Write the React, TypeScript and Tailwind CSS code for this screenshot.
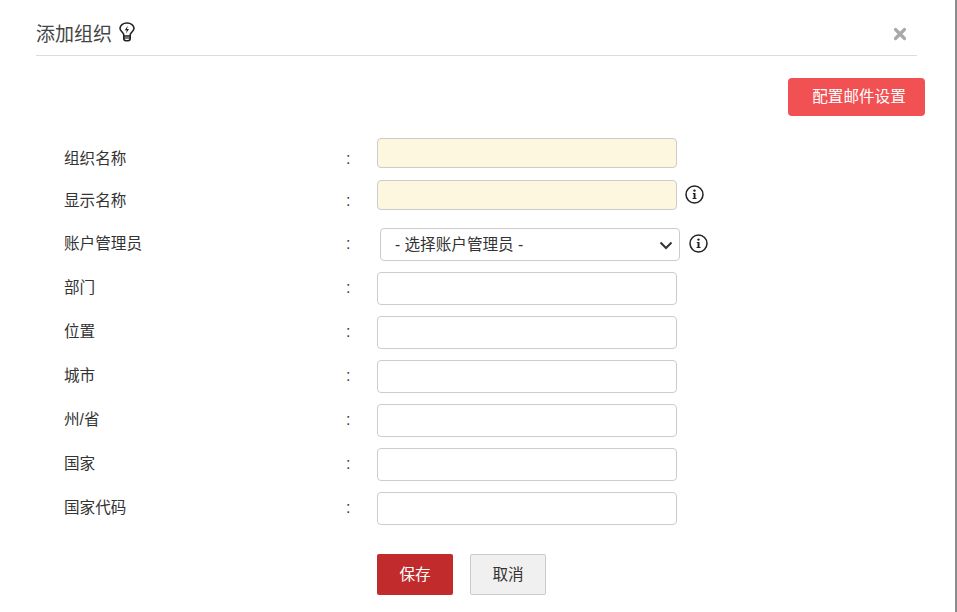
import React from "react";

const font = { fontFamily: '"Liberation Sans", "Noto Sans CJK SC", sans-serif' };

// info icon next to the inputs
function InfoIcon() {
  return (
    <svg width="19" height="19" viewBox="0 0 19 19" className="shrink-0">
      <circle cx="9.5" cy="9.5" r="8.5" fill="none" stroke="#222" strokeWidth="1.5" />
      <circle cx="9.5" cy="5.6" r="1.2" fill="#222" />
      <path d="M7.8 8h2.7v5h1v1H7.600v-1h1V9h-.8z" fill="#222" />
    </svg>
  );
}

function Bulb() {
  return (
    <svg width="16" height="20" viewBox="0 0 16 20">
      <path
        d="M4.8 14V13c0-1-.6-1.800-1.500-2.800C2.200 9 1 7.800 1 6.500 1 3.300 4 1 8 1s7 2.300 7 5.500c0 1.300-1.200 2.500-2.300 3.700-.9 1-1.500 1.800-1.500 2.800v1z"
        fill="none"
        stroke="#222"
        strokeWidth="1.600"
      />
      <path d="M8.800 3.800 5.800 8.300h2l-.8 3.200 3-4.500H8z" fill="#222" />
      <path d="M4.800 14v2.500c0 1.300 1 2.200 2.200 2.200h2c1.200 0 2.200-.9 2.200-2.200V14" fill="none" stroke="#222" strokeWidth="1.600" />
      <path d="M5 16h6" stroke="#222" strokeWidth="1.200" />
    </svg>
  );
}

const rows = [
  { label: "部门" },
  { label: "位置" },
  { label: "城市" },
  { label: "州/省" },
  { label: "国家" },
  { label: "国家代码" },
];

function Label({ text }: { text: string }) {
  return (
    <>
      <div className="w-[282px] text-[15.6px] leading-5 text-[#333]">{text}</div>
      <div className="w-[31px] text-[16px] leading-5 text-[#4a3a30]">:</div>
    </>
  );
}

export default function App() {
  return (
    <div className="w-[957px] h-[612px] bg-white overflow-hidden border-r-2 border-[#8c8c8c]" style={font}>
      {/* Header */}
      <div className="ml-9 mr-[38px] h-[56px] border-b border-[#dcdcdc] flex items-start justify-between">
        <div className="flex items-start mt-[23px]">
          <span className="text-[19px] leading-6 text-[#444]">添加组织</span>
          <span className="ml-[7px] -mt-[1px]">
            <Bulb />
          </span>
        </div>
        <svg width="14" height="14" viewBox="0 0 14 14" className="mt-[27px] mr-[10px]">
          <path d="M2.500 2.500l9 9M11.500 2.500l-9 9" stroke="#a9a9a9" strokeWidth="3.200" strokeLinecap="round" />
        </svg>
      </div>

      <div className="flex justify-end mr-[30px] mt-[22px]">
        <button className="w-[137px] h-[38px] rounded bg-[#f25153] text-white text-[15.6px] pl-[5px]">
          配置邮件设置
        </button>
      </div>

      <div className="mt-[22px] pl-16">
        <div className="flex items-start h-[30px]">
          <div className="pt-[11px] flex">
            <Label text="组织名称" />
          </div>
          <input className="w-[300px] h-[30px] rounded border border-[#cccccc] bg-[#fdf7e0]" />
        </div>

        <div className="flex items-start h-[30px] mt-3">
          <div className="pt-[11px] flex">
            <Label text="显示名称" />
          </div>
          <input className="w-[300px] h-[30px] rounded border border-[#cccccc] bg-[#fdf7e0]" />
          <span className="ml-2 mt-[5px]">
            <InfoIcon />
          </span>
        </div>

        <div className="flex items-start h-[33px] mt-[18px]">
          <div className="pt-[6px] flex">
            <Label text="账户管理员" />
          </div>
          <div className="ml-[3px] w-[300px] h-[33px] rounded border border-[#cccccc] bg-white flex items-center justify-between pl-[14px] pr-[6px] text-[15.6px] text-[#333]">
            <span>- 选择账户管理员 -</span>
            <svg width="14" height="14" viewBox="0 0 14 14">
              <path d="M1.500 4.500 7 10l5.500-5.500" fill="none" stroke="#333" strokeWidth="2" />
            </svg>
          </div>
          <span className="ml-[9px] mt-[6px]">
            <InfoIcon />
          </span>
        </div>

        {rows.map((r) => (
          <div key={r.label} className="flex items-start h-[33px] mt-[11px]">
            <div className="pt-[6px] flex">
              <Label text={r.label} />
            </div>
            <input className="w-[300px] h-[33px] rounded border border-[#cccccc] bg-white" />
          </div>
        ))}

        <div className="flex ml-[313px] mt-[29px] gap-[17px]">
          <button className="w-[76px] h-[41px] rounded-[2px] bg-[#c12b2b] text-white text-[15.6px]">保存</button>
          <button className="w-[76px] h-[41px] rounded-[2px] border border-[#cccccc] bg-[#f0f0f0] text-[#333] text-[15.6px]">
            取消
          </button>
        </div>
      </div>
    </div>
  );
}
